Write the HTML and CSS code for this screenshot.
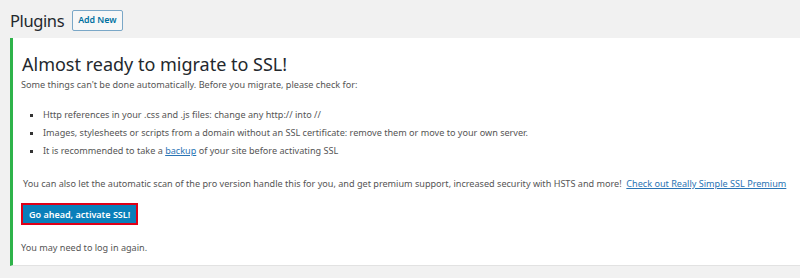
FILE: index.html
```html
<!DOCTYPE html>
<html lang="en">
<head>
  <meta charset="UTF-8">
  <title>Plugins</title>
  <link rel="stylesheet" href="styles.css">
</head>
<body>
  <div class="wrap">
    <div class="title-row">
      <h1>Plugins</h1>
      <a class="add-new" href="#">Add New</a>
    </div>

    <!-- SSL notice -->
    <div class="notice">
      <h2>Almost ready to migrate to SSL!</h2>
      <p class="intro">Some things can't be done automatically. Before you migrate, please check for:</p>
      <ul>
        <li>Http references in your .css and .js files: change any http:// into //</li>
        <li>Images, stylesheets or scripts from a domain without an SSL certificate: remove them or move to your own server.</li>
        <li>It is recommended to take a <a href="#">backup</a> of your site before activating SSL</li>
      </ul>
      <p class="pro">You can also let the automatic scan of the pro version handle this for you, and get premium support, increased security with HSTS and more!&nbsp; <a href="#">Check out Really Simple SSL Premium</a></p>
      <div class="actions">
        <button class="activate">Go ahead, activate SSL!</button>
      </div>
      <p class="note">You may need to log in again.</p>
    </div>
  </div>
</body>
</html>
```

FILE: styles.css
```css
body {
  margin: 0;
  background-color: #f1f1f1;
  color: #555;
  font-family: "Noto Sans", "Open Sans", sans-serif;
  font-size: 9.1px;
  overflow: hidden;
}
.wrap {
  padding: 8px 0 0 10px;
}
.title-row {
  display: flex;
  align-items: center;
  gap: 8px;
  height: 24px;
}
h1 {
  margin: 0;
  font-size: 16.5px;
  letter-spacing: -0.4px;
  font-weight: 400;
  color: #23282d;
}
.add-new {
  display: inline-block;
  padding: 0 5px;
  height: 19px;
  line-height: 19px;
  border: 1px solid #7aa7c7;
  border-radius: 2px;
  background: #f7f7f7;
  color: #0071a1;
  font-size: 8.8px;
  font-weight: 600;
  text-decoration: none;
}
.notice {
  margin-top: 6px;
  height: 228px;
  box-sizing: border-box;
  background: #fff;
  border-left: 3px solid #2fb34a;
  border-bottom: 1px solid #e2e2e2;
  padding: 15px 0 0 8px;
  white-space: nowrap;
}
h2 {
  margin: 0 0 0 1px;
  font-size: 18px;
  font-weight: 400;
  line-height: 22px;
  color: #23282d;
}
p {
  margin: 0;
  line-height: 16px;
}
.intro {
  margin-top: 2px;
}
ul {
  list-style: square;
  margin: 13px 0 0;
  padding-left: 22px;
}
li {
  line-height: 18px;
}
li::marker {
  color: #333;
}
a {
  color: #2a74b4;
}
.pro {
  margin-top: 16px;
  padding-left: 2px;
}
.actions {
  margin-top: 11px;
}
.activate {
  display: block;
  height: 22px;
  padding: 0 6px;
  border: 2px solid #e00016;
  background: #0a7fba;
  color: #fff;
  font-family: inherit;
  font-size: 9px;
  font-weight: 600;
}
.note {
  margin-top: 15px;
}
```
